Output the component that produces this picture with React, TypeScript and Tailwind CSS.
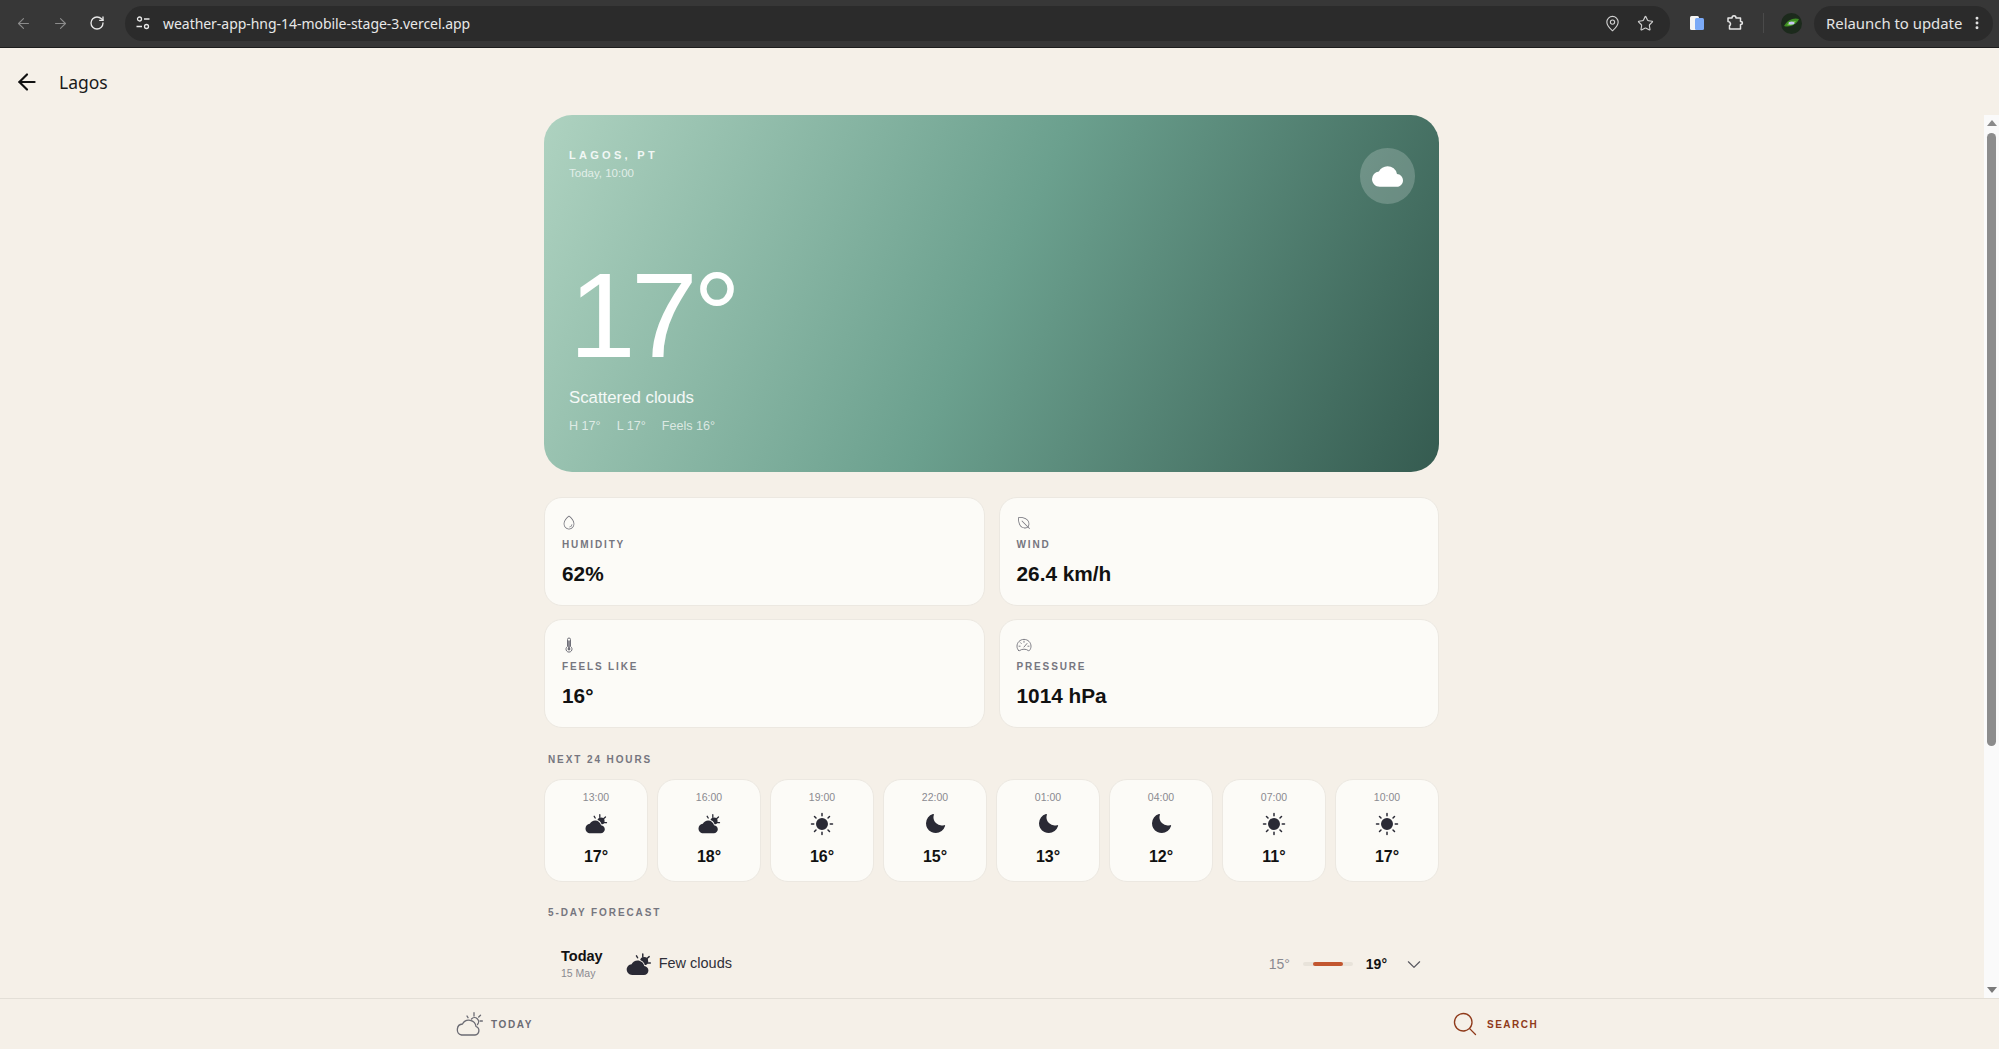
import React from "react";
import { PiSunFill, PiMoonFill, PiDropLight, PiLeafLight, PiCaretDown, PiMagnifyingGlassLight } from "react-icons/pi";
import { MdCloud } from "react-icons/md";
import { ArrowLeft, ArrowRight, RotateCw, MapPin, Star, EllipsisVertical } from "lucide-react";

const hours = [
  ["13:00", "cs", "17°"], ["16:00", "cs", "18°"], ["19:00", "sun", "16°"], ["22:00", "moon", "15°"],
  ["01:00", "moon", "13°"], ["04:00", "moon", "12°"], ["07:00", "sun", "11°"], ["10:00", "sun", "17°"],
];

function CloudSunSolid({ size, bg }: { size: number; bg: string }) {
  return (
    <svg width={size} height={size} viewBox="0 0 24 24" fill="none">
      <circle cx="17" cy="9" r="3.6" fill="#2a2a35" />
      <g stroke="#2a2a35" strokeWidth="1.3" strokeLinecap="round">
        <path d="M15.8 2.7v2.6M10.2 4.3l1 1.7M21.5 5l-2 1.7M22.5 10.7h-2.3" />
      </g>
      <path
        transform="translate(1.5 5.2) scale(.805)"
        d="M19.35 10.04C18.67 6.59 15.64 4 12 4 9.11 4 6.6 5.64 5.35 8.04 2.34 8.36 0 10.91 0 14c0 3.31 2.69 6 6 6h13c2.76 0 5-2.24 5-5 0-2.64-2.05-4.78-4.65-4.96z"
        fill="#2a2a35"
        stroke={bg}
        strokeWidth="1.9"
        paintOrder="stroke"
      />
    </svg>
  );
}

function CloudSunOutline() {
  return (
    <svg width="28" height="28" viewBox="0 0 28 28" fill="none" stroke="#6b6b73" strokeWidth="1.3" strokeLinecap="round" strokeLinejoin="round">
      <path d="M6.5 25H20a4.4 4.4 0 0 0 1-8.5a7.2 7.2 0 0 0-13.5-2.5a5.6 5.6 0 0 0-1 11z" />
      <path d="M16.5 9a4 4 0 0 1 6 5.5" />
      <path d="M19 2.7v3.3M12 6l1 1.7M25.5 5.3l-1.8 1.7M27.4 11h-2.4" />
    </svg>
  );
}

function HourIcon({ k }: { k: string }) {
  if (k === "cs") return <CloudSunSolid size={24} bg="#fcfbf7" />;
  if (k === "sun") return <PiSunFill size={24} color="#2a2a35" />;
  return <PiMoonFill size={24} color="#2a2a35" />;
}

function Thermo() {
  return (
    <svg width="16" height="16" viewBox="0 0 16 16" fill="none" stroke="currentColor" strokeWidth="1">
      <path d="M6.5 9.5V2.5a1.5 1.5 0 0 1 3 0v7a3 3 0 1 1-3 0z" />
      <path d="M8 3.5v8" strokeWidth="1.6" />
      <circle cx="8" cy="12" r="1.4" fill="currentColor" stroke="none" />
    </svg>
  );
}

function Gauge() {
  return (
    <svg width="16" height="16" viewBox="0 0 16 16" fill="none" stroke="currentColor" strokeWidth="0.9" strokeLinecap="round">
      <path d="M2.6 13.5C1.6 12.4 1 10.9 1 9.2 1 5.4 4.1 2.4 8 2.4s7 3 7 6.8c0 1.7-.6 3.2-1.6 4.3-.4.3-.8.3-1.2 0-1-.8-2.5-1.3-4.2-1.3s-3.2.5-4.2 1.3c-.4.3-.8.3-1.2 0z" />
      <path d="M8 4.2v1.1M4.5 5.7l.8.8M3 9.2h1.1M11.9 9.2H13M8 10l3-3.5" />
    </svg>
  );
}

function Stat({ icon, label, value }: { icon: React.ReactNode; label: string; value: string }) {
  return (
    <div className="h-[109px] rounded-[18px] border border-[#ece8e1] bg-[#fcfbf7] pl-[17px] pt-[17px]">
      <div className="h-4 -ml-[1px] text-[#6f6f78]">{icon}</div>
      <div className="mt-[7px] text-[10px] font-bold leading-[14px] tracking-[1.85px] text-[#76767f]">{label}</div>
      <div className="mt-[8px] text-[20.8px] font-bold leading-7 text-[#111111]">{value}</div>
    </div>
  );
}

function SectionTitle({ children }: { children: React.ReactNode }) {
  return <div className="pl-1 text-[10px] font-bold leading-[14px] tracking-[1.9px] text-[#76767f]">{children}</div>;
}

export default function App() {
  return (
    <div className="flex h-screen w-screen flex-col overflow-hidden bg-[#f5f0e8] font-['Liberation_Sans',sans-serif]">
      {/* browser chrome */}
      <div className="flex h-[48px] shrink-0 items-center border-b border-[#1d1d1d] bg-[#373737] pb-[1px] font-['Noto_Sans',sans-serif]">
        <div className="flex w-[125px] shrink-0 items-center pl-[15px] text-[#8b8b8b]">
          <ArrowLeft size={17} strokeWidth={1.6} />
          <ArrowRight size={17} strokeWidth={1.6} className="ml-5" />
          <RotateCw size={16} strokeWidth={2} className="ml-5 text-[#e8e8e8]" />
        </div>
        <div className="flex h-[35px] w-[1545px] shrink-0 items-center rounded-full bg-[#2b2b2b] pl-[8px] pr-[16px]">
          <svg width="16" height="16" viewBox="0 0 16 16" fill="none" stroke="#e8e8e8" strokeWidth="1.3" className="ml-[2px]">
            <circle cx="4.5" cy="4" r="2" />
            <path d="M9 4h5.5M1.5 11.5H7" />
            <circle cx="11.5" cy="11.5" r="2" />
          </svg>
          <span className="ml-[12px] text-[14px] tracking-[-0.04px] text-[#e8e8e8]">weather-app-hng-14-mobile-stage-3.vercel.app</span>
          <MapPin size={17} strokeWidth={1.6} className="ml-auto text-[#d0d0d0]" />
          <Star size={17} strokeWidth={1.6} className="ml-4 text-[#d0d0d0]" />
        </div>
        <svg width="16" height="16" viewBox="0 0 16 16" className="ml-[19px]">
          <rect x="1" y="1" width="9" height="14" rx="1.5" fill="#f5f5f5" />
          <rect x="6" y="3" width="9" height="12" rx="1.5" fill="#7baaf7" />
        </svg>
        <svg width="18" height="18" viewBox="0 0 18 18" fill="none" stroke="#e6e6e6" strokeWidth="1.5" strokeLinejoin="round" className="ml-[21px]">
          <path d="M2 4h4c0-3 4-3 4 0h4.5v3.5c2.5 0 2.5 3 0 3V15H3.5v-3.5c1.5 0 1.5-4-1.5-4z" />
        </svg>
        <div className="ml-[19px] h-5 w-[1px] bg-[#4a4a4a]" />
        <svg width="21" height="21" viewBox="0 0 21 21" className="ml-[17px]">
          <circle cx="10.5" cy="10.5" r="10.5" fill="#1c2a1c" />
          <path d="M3 13c3-6 10-9 15-7-2 5-9 9-15 7z" fill="#3f8f24" />
          <path d="M6 12c3-3 6-4 9-4-2 3-6 5-9 4z" fill="#7bc94a" />
          <ellipse cx="10.5" cy="10" rx="3" ry="1.6" fill="#c9c6f5" />
        </svg>
        <div className="ml-[12px] flex h-[35px] w-[179px] shrink-0 items-center rounded-full bg-[#2b2b2b] pl-[12px] text-[#e4e4e4]">
          <span className="text-[14.9px] leading-none">Relaunch to update</span>
          <EllipsisVertical size={16} strokeWidth={2.4} className="ml-auto mr-[8px]" />
        </div>
      </div>

      {/* app header */}
      <div className="flex h-[67px] shrink-0 items-center pl-[14px] pt-[1px]">
        <ArrowLeft size={26} strokeWidth={2} color="#111111" />
        <span className="ml-[19px] font-['Noto_Sans',sans-serif] text-[17.5px] text-[#1a1a1a]">Lagos</span>
      </div>

      {/* body + scrollbar */}
      <div className="flex min-h-0 flex-1">
        <div className="min-w-0 flex-1 overflow-hidden pr-[1px]">
          <div className="mx-auto w-[895px]">
            <section className="flex h-[357px] flex-col rounded-[28px] bg-[linear-gradient(115deg,#aed2c0_0%,#6ba08e_50%,#355b50_100%)] pb-[38px] pl-[25px] pr-[24px] pt-[33px] text-white">
              <div className="flex items-start justify-between">
                <div>
                  <div className="text-[11px] font-bold leading-[14px] tracking-[0.3em] text-white/85">LAGOS, PT</div>
                  <div className="mt-[3px] text-[11.5px] leading-[16px] text-white/70">Today, 10:00</div>
                </div>
                <div className="flex h-[56px] w-[55px] items-center justify-center rounded-full bg-white/20">
                  <MdCloud size={31} color="#ffffff" />
                </div>
              </div>
              <div className="mt-auto text-[120px] leading-[120px] tracking-[-0.04em]">17°</div>
              <div className="mt-[11px] text-[16.8px] leading-[24px] text-white/90">Scattered clouds</div>
              <div className="mt-[8px] flex gap-4 text-[12.6px] leading-[16px] text-white/70">
                <span>H 17°</span>
                <span>L 17°</span>
                <span>Feels 16°</span>
              </div>
            </section>

            <div className="mt-[25px] grid grid-cols-2 gap-x-[14px] gap-y-[13px]">
              <Stat icon={<PiDropLight size={16} />} label="HUMIDITY" value="62%" />
              <Stat icon={<PiLeafLight size={16} className="-scale-x-100" />} label="WIND" value="26.4 km/h" />
              <Stat icon={<Thermo />} label="FEELS LIKE" value="16°" />
              <Stat icon={<Gauge />} label="PRESSURE" value="1014 hPa" />
            </div>

            <div className="mt-[25px]"><SectionTitle>NEXT 24 HOURS</SectionTitle></div>
            <div className="mt-[12px] grid grid-cols-8 gap-[9px]">
              {hours.map(([t, k, v]) => (
                <div key={t} className="flex h-[103px] flex-col items-center rounded-[18px] border border-[#ece8e1] bg-[#fcfbf7] pt-[10px]">
                  <div className="text-[10.5px] leading-[14px] text-[#8a8a90]">{t}</div>
                  <div className="mt-[8px] h-6"><HourIcon k={k} /></div>
                  <div className="mt-[9px] text-[16px] font-bold leading-6 text-[#111111]">{v}</div>
                </div>
              ))}
            </div>

            <div className="mt-6"><SectionTitle>5-DAY FORECAST</SectionTitle></div>
            <div className="mt-[14px] flex h-[60px] items-center pl-[17px] pr-[16px]">
              <div className="mb-[2px]">
                <div className="text-[14.5px] font-bold leading-[18px] text-[#111111]">Today</div>
                <div className="mt-[1px] text-[10.5px] leading-[14px] text-[#8a8a90]">15 May</div>
              </div>
              <div className="ml-[22px]"><CloudSunSolid size={27} bg="#f5f0e8" /></div>
              <span className="ml-[7px] text-[14.5px] text-[#2f2f38]">Few clouds</span>
              <span className="ml-auto text-[14px] text-[#8a8a90]">15°</span>
              <div className="relative ml-[13px] h-[4px] w-[50px] rounded-full bg-[#e8e3da]">
                <div className="absolute left-[10px] top-0 h-[4px] w-[30px] rounded-full bg-[#c2562f]" />
              </div>
              <span className="ml-[13px] text-[14px] font-bold text-[#111111]">19°</span>
              <PiCaretDown size={18} color="#55555d" className="ml-[18px]" />
            </div>
          </div>
        </div>
        {/* scrollbar */}
        <div className="flex w-[15px] shrink-0 flex-col items-center bg-[#fafafa]">
          <svg width="10" height="6" viewBox="0 0 10 6" className="mt-[5px]"><path d="M5 0l5 6H0z" fill="#8a8a8a" /></svg>
          <div className="mt-[7px] h-[613px] w-[9px] rounded-full bg-[#8c8c8c]" />
          <svg width="10" height="6" viewBox="0 0 10 6" className="mt-auto mb-[5px]"><path d="M5 6L0 0h10z" fill="#7a7a7a" /></svg>
        </div>
      </div>

      {/* bottom nav */}
      <div className="flex h-[51px] shrink-0 items-center border-t border-[#e3dfd7] bg-[#f5f0e8] pl-[455px]">
        <div className="flex w-[80px] items-center gap-2">
          <CloudSunOutline />
          <span className="text-[10px] font-bold tracking-[0.16em] text-[#6b6b73]">TODAY</span>
        </div>
        <div className="ml-[916px] flex items-center gap-2">
          <PiMagnifyingGlassLight size={28} color="#8f3a1a" />
          <span className="text-[10px] font-bold tracking-[0.15em] text-[#8f3a1a]">SEARCH</span>
        </div>
      </div>
    </div>
  );
}
